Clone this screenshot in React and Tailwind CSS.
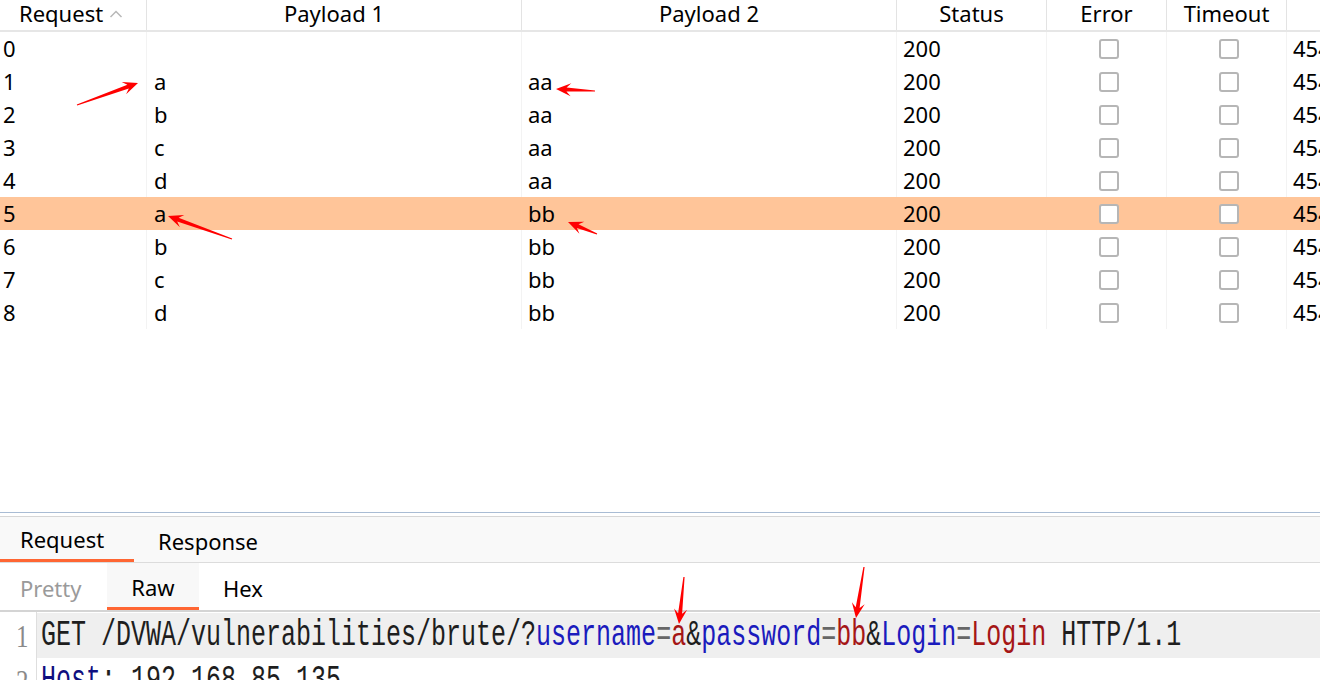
import React from "react";

const rows = [
  ["0", "", "", "200"],
  ["1", "a", "aa", "200"],
  ["2", "b", "aa", "200"],
  ["3", "c", "aa", "200"],
  ["4", "d", "aa", "200"],
  ["5", "a", "bb", "200"],
  ["6", "b", "bb", "200"],
  ["7", "c", "bb", "200"],
  ["8", "d", "bb", "200"],
];

const COLS = "grid grid-cols-[147px_375px_375px_150px_120px_120px_33px]";

function Arrow({ x1, y1, x2, y2 }) {
  const dx = x2 - x1;
  const dy = y2 - y1;
  const len = Math.hypot(dx, dy);
  const ux = dx / len;
  const uy = dy / len;
  const px = -uy;
  const py = ux;
  const hl = 15;
  const hw = 6.5;
  const bx = x2 - ux * hl;
  const by = y2 - uy * hl;
  const nx = x2 - ux * hl * 0.7;
  const ny = y2 - uy * hl * 0.7;
  const pts = [
    [x1 + px * 0.6, y1 + py * 0.6],
    [nx + px * 2, ny + py * 2],
    [bx + px * hw, by + py * hw],
    [x2, y2],
    [bx - px * hw, by - py * hw],
    [nx - px * 2, ny - py * 2],
    [x1 - px * 0.6, y1 - py * 0.6],
  ]
    .map((p) => p[0].toFixed(1) + "," + p[1].toFixed(1))
    .join(" ");
  return <polygon points={pts} fill="#ff0000" />;
}

function Checkbox({ sel }) {
  return (
    <div className="flex h-full items-center justify-center pl-[4px]">
      <div className={"h-[20px] w-[20px] rounded-[3px] border-2 border-[#b6b6b6] " + (sel ? "bg-white" : "bg-white")} />
    </div>
  );
}

export default function App() {
  return (
    <div className="relative h-[680px] w-[1320px] overflow-hidden bg-white text-black font-['Noto_Sans',sans-serif]">
      {/* Table */}
      <div className="h-[512px] overflow-hidden">
        <div className={COLS + " h-[32px] border-b-2 border-[#e6e6e6] text-[22px] leading-[26px]"}>
          <div className="flex items-start gap-[6px] border-r border-[#e3e3e3] pl-[19px]">
            <span>Request</span>
            <svg width="14" height="10" viewBox="0 0 14 10" className="mt-[9px]">
              <polyline points="1.5,8 7,2.5 12.5,8" fill="none" stroke="#b8b8b8" strokeWidth="1.5" />
            </svg>
          </div>
          <div className="border-r border-[#e3e3e3] text-center">Payload 1</div>
          <div className="border-r border-[#e3e3e3] text-center">Payload 2</div>
          <div className="border-r border-[#e3e3e3] text-center">Status</div>
          <div className="border-r border-[#e3e3e3] text-center">Error</div>
          <div className="border-r border-[#e3e3e3] text-center">Timeout</div>
          <div />
        </div>
        {rows.map((r, i) => {
          const sel = i === 5;
          return (
            <div
              key={i}
              className={COLS + " h-[33px] text-[22px] leading-[33px] " + (sel ? "bg-[#ffc599]" : "bg-white")}
            >
              <div className={"pl-[3px] " + (sel ? "" : "border-r border-[#f3f3f3]")}>{r[0]}</div>
              <div className={"pl-[7px] " + (sel ? "" : "border-r border-[#f3f3f3]")}>{r[1]}</div>
              <div className={"pl-[6px] " + (sel ? "" : "border-r border-[#f3f3f3]")}>{r[2]}</div>
              <div className={"pl-[6px] " + (sel ? "" : "border-r border-[#f3f3f3]")}>{r[3]}</div>
              <div className={sel ? "" : "border-r border-[#f3f3f3]"}>
                <Checkbox sel={sel} />
              </div>
              <div className={sel ? "" : "border-r border-[#f3f3f3]"}>
                <Checkbox sel={sel} />
              </div>
              <div className="overflow-hidden whitespace-nowrap pl-[6px]">454</div>
            </div>
          );
        })}
      </div>

      {/* Bottom panel */}
      <div className="border-t border-[#a9bcd4]">
        <div className="h-[3px] bg-white" />
        <div className="border-t border-[#d6d6d6] bg-[#f9f9f9]">
          <div className="flex h-[45px] text-[22px]">
            <div className="flex w-[134px] items-center border-b-[3px] border-[#ff6633] pl-[20px] pt-[3px]">Request</div>
            <div className="flex items-center pl-[24px] pt-[3px]">Response</div>
          </div>
        </div>
        <div className="border-t border-[#dcdcdc] bg-white">
          <div className="flex h-[47px] text-[22px]">
            <div className="flex w-[107px] items-center pl-[20px] pt-[4px] text-[#9a9a9a]">Pretty</div>
            <div className="flex w-[92px] items-center justify-center border-b-[3px] border-[#ff6633] bg-[#f8f8f8] pt-[4px]">Raw</div>
            <div className="flex items-center pl-[24px] pt-[4px]">Hex</div>
          </div>
        </div>
        <div className="border-t-2 border-[#d4d4d4]">
          <div className="flex font-['Liberation_Mono',monospace] text-[25px]">
            <div className="w-[37px] shrink-0 border-r border-[#dedede] pt-[1px] font-['Liberation_Serif',serif] text-[#8a8a8a]">
              <div className="h-[45px] pl-[16px] leading-[45px]"><span className="inline-block scale-y-[1.3]">1</span></div>
              <div className="h-[45px] pl-[16px] leading-[45px]"><span className="inline-block scale-y-[1.3]">2</span></div>
            </div>
            <div className="flex-1 pt-[1px]">
              <div className="h-[45px] whitespace-pre bg-[#efefef] pl-[4px] leading-[45px] text-[#1e1e1e]">
                <span className="inline-block origin-center scale-y-[1.45]">
                  <span>GET /DVWA/vulnerabilities/brute/?</span>
                  <span className="text-[#1b1bbd]">username</span>
                  <span className="text-[#666]">=</span>
                  <span className="text-[#a51616]">a</span>
                  <span>&amp;</span>
                  <span className="text-[#1b1bbd]">password</span>
                  <span className="text-[#666]">=</span>
                  <span className="text-[#a51616]">bb</span>
                  <span>&amp;</span>
                  <span className="text-[#1b1bbd]">Login</span>
                  <span className="text-[#666]">=</span>
                  <span className="text-[#a51616]">Login</span>
                  <span> HTTP/1.1</span>
                </span>
              </div>
              <div className="h-[45px] whitespace-pre pl-[4px] leading-[45px] text-[#1e1e1e]">
                <span className="inline-block origin-center scale-y-[1.45]">
                  <span className="text-[#0f0f80]">Host</span>
                  <span>: 192.168.85.135</span>
                </span>
              </div>
            </div>
          </div>
        </div>
      </div>

      {/* Annotation arrows */}
      <svg className="pointer-events-none absolute left-0 top-0" width="1320" height="680">
        <Arrow x1={77} y1={105} x2={138} y2={83} />
        <Arrow x1={595} y1={91} x2={556} y2={89} />
        <Arrow x1={232} y1={239} x2={168} y2={216} />
        <Arrow x1={597} y1={234} x2={568} y2={222} />
        <Arrow x1={684} y1={577} x2={679} y2={624} />
        <Arrow x1={864} y1={567} x2={856} y2={618} />
      </svg>
    </div>
  );
}
